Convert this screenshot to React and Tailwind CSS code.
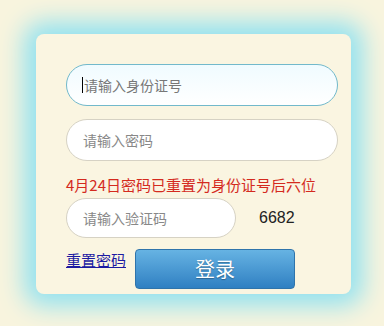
export default function App() {
  return (
    <div className="w-[384px] h-[326px] bg-[#f8f4de] pt-[34px] pl-[36px] font-['Noto_Sans_CJK_SC',sans-serif]">
      <div className="w-[315px] h-[260px] rounded-[8px] bg-[#faf5e1] shadow-[0_0_24px_12px_#93e2f0] pt-[30px] pl-[30px]">
        <div className="w-[272px] h-[42px] rounded-full border border-[#72b9cb] bg-gradient-to-b from-[#f0fbff] to-white flex items-center pl-[15px]">
          <span className="w-px h-[16px] bg-black mr-px" />
          <span className="text-[14px] text-[#777]">请输入身份证号</span>
        </div>
        <div className="mt-[13px] w-[272px] h-[42px] rounded-full border border-[#d6d2c4] bg-white flex items-center pl-[16px]">
          <span className="text-[14px] text-[#888]">请输入密码</span>
        </div>
        <div className="mt-[14px] text-[15px] leading-[20px] text-[#d42a1e] whitespace-nowrap">
          4月24日密码已重置为身份证号后六位
        </div>
        <div className="mt-[3px] flex items-center">
          <div className="w-[170px] h-[40px] rounded-full border border-[#d6d2c4] bg-white flex items-center pl-[16px]">
            <span className="text-[14px] text-[#888]">请输入验证码</span>
          </div>
          <span className="ml-[23px] text-[16px] text-[#222] font-['Liberation_Sans',sans-serif]">6682</span>
        </div>
        <div className="mt-[11px] flex items-start">
          <a href="#" className="mt-[1px] text-[15px] leading-[20px] text-[#1c1aa2] underline">重置密码</a>
          <button className="ml-[9px] w-[160px] h-[40px] rounded-[4px] border border-[#2f74ab] bg-gradient-to-b from-[#66b3e3] to-[#2f80c2] text-white text-[20px] [text-shadow:0_1px_1px_rgba(0,0,0,0.3)]">
            登录
          </button>
        </div>
      </div>
    </div>
  );
}
